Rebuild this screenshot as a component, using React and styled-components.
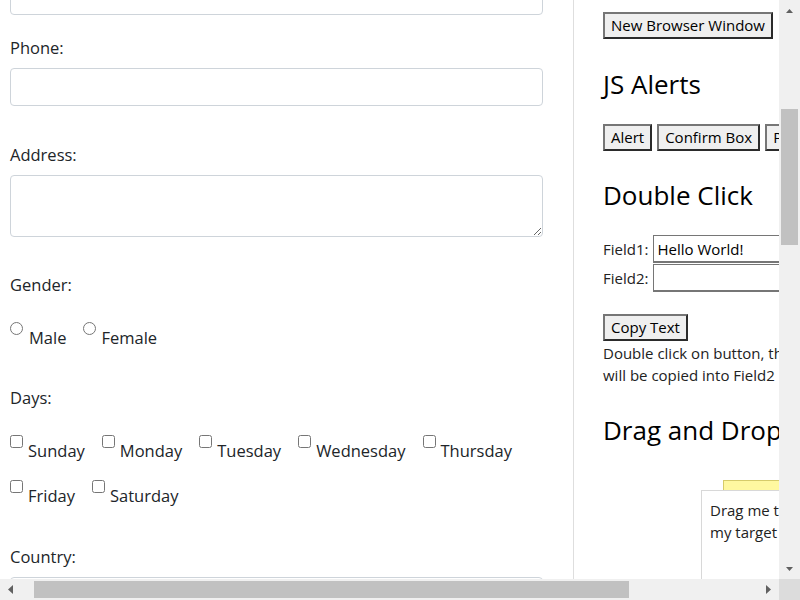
import React from 'react';
import styled, { createGlobalStyle } from 'styled-components';

const GlobalStyle = createGlobalStyle`
  html, body { margin: 0; padding: 0; background: #fff; }
  body {
    font-family: "Open Sans", "Noto Sans", sans-serif;
    color: #212529;
    overflow: hidden;
  }
  * { box-sizing: border-box; }
`;

const Window = styled.div`
  width: 800px;
  height: 600px;
  display: grid;
  grid-template-columns: 779px 21px;
  grid-template-rows: 579px 21px;
  overflow: hidden;
`;

const Viewport = styled.div`
  overflow: hidden;
  display: flex;
  align-items: stretch;
`;

const LeftColumn = styled.div`
  flex: 0 0 533px;
  margin-left: 10px;
  margin-right: 30px;
  font-size: 16.5px;
  line-height: 24px;
  color: #212529;
`;

const RightColumn = styled.div`
  flex: 0 0 430px;
  border-left: 1px solid #dedede;
  padding: 12px 0 0 29px;
  font-size: 15px;
  line-height: 22px;
  color: #222;
`;

const FormGroup = styled.div`
  margin-top: ${(p) => p.$top}px;
`;

const Label = styled.label`
  display: block;
  margin-bottom: ${(p) => p.$gap}px;
`;

const TextInput = styled.input`
  display: block;
  width: 100%;
  height: 38px;
  margin: ${(p) => (p.$cut ? `-${p.$cut}px 0 0` : '0')};
  padding: 6px 12px;
  border: 1px solid #ced4da;
  border-radius: 4px;
  font: inherit;
  color: #495057;
  background: #fff;
`;

const TextArea = styled.textarea`
  display: block;
  width: 100%;
  height: 62px;
  margin: 0;
  padding: 6px 12px;
  border: 1px solid #ced4da;
  border-radius: 4px;
  font: inherit;
`;

const Options = styled.div`
  display: flex;
  flex-wrap: wrap;
  gap: 17px;
`;

const Option = styled.label`
  display: flex;
  align-items: flex-start;
  gap: ${(p) => p.$gap}px;
`;

const Choice = styled.input`
  margin: 0;
  width: 13px;
  height: 13px;
`;

const OptionText = styled.span`
  padding-top: 4px;
`;

const Button = styled.button`
  font-family: "Open Sans", "Noto Sans", sans-serif;
  font-size: 15px;
  line-height: 21px;
  height: 27px;
  padding: 1px 6px;
  margin: 0;
  color: #000;
  background: #efefef;
  border: 2px solid;
  border-color: #767676 #2b2b2b #2b2b2b #767676;
  white-space: nowrap;
  flex-shrink: 0;
`;

const Heading = styled.h2`
  font-size: 26px;
  font-weight: 400;
  line-height: 31px;
  margin: ${(p) => p.$top}px 0 ${(p) => p.$bottom}px;
  color: #000;
  white-space: nowrap;
`;

const ButtonRow = styled.div`
  display: flex;
  gap: 5px;
`;

const FieldGrid = styled.div`
  display: grid;
  grid-template-columns: auto 200px;
  column-gap: 5px;
  row-gap: 1px;
  align-items: center;
  justify-content: start;
`;

const FieldInput = styled.input`
  height: 28px;
  margin: 0;
  padding: 1px 3px;
  border: 1px solid #767676;
  border-bottom-width: 2px;
  font-family: inherit;
  font-size: 15px;
  color: #000;
`;

const Note = styled.p`
  margin: 1px 0 0;
  white-space: nowrap;
`;

const CopyRow = styled.div`
  margin-top: 22px;
`;

const DragArea = styled.div`
  position: relative;
  margin-top: 34px;
  height: 160px;
`;

const Droppable = styled.div`
  margin-left: 120px;
  width: 150px;
  height: 150px;
  background: #fff8a0;
  border: 1px solid #d6cb6a;
`;

const Draggable = styled.div`
  position: absolute;
  left: 98px;
  top: 10px;
  width: 104px;
  height: 110px;
  padding: 8px 8px;
  background: #fff;
  border: 1px solid #d8d8d8;
  color: #222;
`;

/* ---- fake scrollbars ---- */
const VBar = styled.div`
  background: #f0f0f0;
  display: flex;
  flex-direction: column;
`;

const HBar = styled.div`
  background: #f0f0f0;
  display: flex;
`;

const Corner = styled.div`
  background: #dcdcdc;
`;

const ArrowCell = styled.div`
  flex: 0 0 21px;
  height: 21px;
  display: flex;
  align-items: center;
  justify-content: center;
`;

const Track = styled.div`
  flex: 1;
  display: flex;
  flex-direction: ${(p) => (p.$vertical ? 'column' : 'row')};
`;

const Thumb = styled.div`
  background: #c1c1c1;
  flex-shrink: 0;
  ${(p) =>
    p.$vertical
      ? 'width: 17px; margin-left: 2px;'
      : 'height: 17px; margin-top: 2px;'}
`;

const Arrow = ({ dir }) => {
  const shapes = {
    up: { w: 7, h: 4, pts: '0,4 3.5,0 7,4' },
    down: { w: 7, h: 4, pts: '0,0 7,0 3.5,4' },
    left: { w: 5, h: 9, pts: '5,0 5,9 0,4.5' },
    right: { w: 5, h: 9, pts: '0,0 5,4.5 0,9' },
  };
  const s = shapes[dir];
  return (
    <svg width={s.w} height={s.h} viewBox={`0 0 ${s.w} ${s.h}`}>
      <polygon points={s.pts} fill="#606060" />
    </svg>
  );
};

const scroll = {
  v: { offset: 88, size: 136 },
  h: { offset: 13, size: 595 },
};

const days = ['Sunday', 'Monday', 'Tuesday', 'Wednesday', 'Thursday', 'Friday', 'Saturday'];

export default function App() {
  return (
    <>
      <GlobalStyle />
      <Window>
        <Viewport>
          <LeftColumn>
            <TextInput $cut={23} type="text" />
            <FormGroup $top={21}>
              <Label $gap={8}>Phone:</Label>
              <TextInput type="text" />
            </FormGroup>
            <FormGroup $top={37}>
              <Label $gap={8}>Address:</Label>
              <TextArea />
            </FormGroup>
            <FormGroup $top={36}>
              <Label $gap={25}>Gender:</Label>
              <Options>
                <Option $gap={6}>
                  <Choice type="radio" name="gender" />
                  <OptionText>Male</OptionText>
                </Option>
                <Option $gap={5}>
                  <Choice type="radio" name="gender" />
                  <OptionText>Female</OptionText>
                </Option>
              </Options>
            </FormGroup>
            <FormGroup $top={36}>
              <Label $gap={25}>Days:</Label>
              <Options style={{ maxWidth: 520 }}>
                {days.map((d) => (
                  <Option key={d} $gap={5}>
                    <Choice type="checkbox" />
                    <OptionText>{d}</OptionText>
                  </Option>
                ))}
              </Options>
            </FormGroup>
            <FormGroup $top={37}>
              <Label $gap={8}>Country:</Label>
              <TextInput type="text" />
            </FormGroup>
          </LeftColumn>

          <RightColumn>
            <ButtonRow>
              <Button>New Browser Window</Button>
            </ButtonRow>
            <Heading $top={30} $bottom={24}>JS Alerts</Heading>
            <ButtonRow>
              <Button>Alert</Button>
              <Button>Confirm Box</Button>
              <Button>Prompt</Button>
            </ButtonRow>
            <Heading $top={29} $bottom={24}>Double Click</Heading>
            <FieldGrid>
              <span>Field1:</span>
              <FieldInput type="text" defaultValue="Hello World!" />
              <span>Field2:</span>
              <FieldInput type="text" />
            </FieldGrid>
            <CopyRow>
              <Button>Copy Text</Button>
            </CopyRow>
            <Note>
              Double click on button, the text from Field1
              <br />
              will be copied into Field2
            </Note>
            <Heading $top={29} $bottom={0}>Drag and Drop</Heading>
            <DragArea>
              <Droppable />
              <Draggable>Drag me to my target</Draggable>
            </DragArea>
          </RightColumn>
        </Viewport>

        <VBar>
          <ArrowCell><Arrow dir="up" /></ArrowCell>
          <Track $vertical>
            <Thumb $vertical style={{ marginTop: scroll.v.offset, height: scroll.v.size }} />
          </Track>
          <ArrowCell><Arrow dir="down" /></ArrowCell>
        </VBar>
        <HBar>
          <ArrowCell><Arrow dir="left" /></ArrowCell>
          <Track>
            <Thumb style={{ marginLeft: scroll.h.offset, width: scroll.h.size }} />
          </Track>
          <ArrowCell><Arrow dir="right" /></ArrowCell>
        </HBar>
        <Corner />
      </Window>
    </>
  );
}
